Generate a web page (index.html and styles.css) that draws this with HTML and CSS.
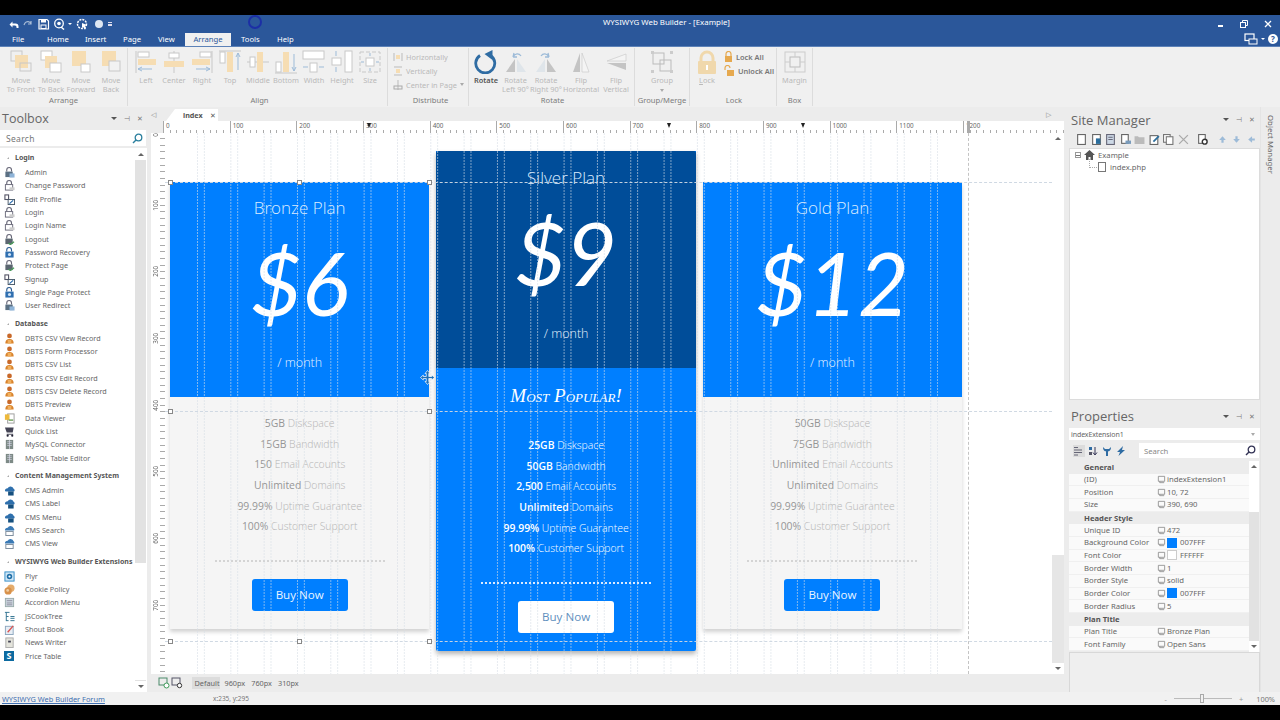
FILE: index.html
```html
<!DOCTYPE html>
<html>
	<head>
		<meta charset="UTF-8">
		<title>WYSIWYG Web Builder - [Example]</title>
		<link rel="stylesheet" href="styles.css">
	</head>
	<body>
		<svg class="defs" width="0" height="0">
			<symbol id="i-lock" viewBox="0 0 12 12"><path d="M3 5V3.2a2.6 2.6 0 0 1 5.2 0V5" fill="none" stroke="#667" stroke-width="1.2"/><rect x="1.5" y="5" width="8" height="6" fill="#5b7083"/><rect x="6" y="7" width="5.5" height="4.5" fill="#8fb4d8"/></symbol>
			<symbol id="i-lock2" viewBox="0 0 12 12"><path d="M3 5V3.2a2.6 2.6 0 0 1 5.2 0V5" fill="none" stroke="#667" stroke-width="1.2"/><rect x="1.5" y="5" width="8" height="6" fill="#fff" stroke="#667"/><rect x="6" y="8" width="5.5" height="3" fill="#ccc"/></symbol>
			<symbol id="i-lock3" viewBox="0 0 12 12"><path d="M3 5V3.2a2.6 2.6 0 0 1 5.2 0V5" fill="none" stroke="#27598f" stroke-width="1.2"/><rect x="1.5" y="5" width="9" height="6.5" fill="#2f6fb0"/><circle cx="6" cy="8.2" r="1.7" fill="#cfe2f5"/></symbol>
			<symbol id="i-edit" viewBox="0 0 12 12"><rect x="1" y="1" width="4" height="5" fill="none" stroke="#556" stroke-width="1.2"/><rect x="4.5" y="6" width="7" height="5.5" fill="#fff" stroke="#456"/><path d="M6 10.5 10 7" stroke="#26a" stroke-width="1.3"/></symbol>
			<symbol id="i-out" viewBox="0 0 12 12"><path d="M3 5V3.2a2.6 2.6 0 0 1 5.2 0V5" fill="none" stroke="#667" stroke-width="1.2"/><rect x="1.5" y="5" width="8" height="6" fill="#5b6670"/><path d="M5 10l2 1.5 4-3" fill="none" stroke="#4a9a5a" stroke-width="1.4"/></symbol>
			<symbol id="i-person" viewBox="0 0 12 12"><circle cx="6" cy="3.2" r="2.6" fill="#c8692a"/><path d="M1.5 11.5c0-4 2-5 4.5-5s4.5 1 4.5 5z" fill="#d9822b"/><path d="M4 7.5h4v4H4z" fill="#f0b060"/></symbol>
			<symbol id="i-cloud" viewBox="0 0 12 12"><path d="M1 6.5a3 3 0 0 1 3-3 3.5 3.5 0 0 1 6.500.5 2 2 0 0 1 .5 3H2z" fill="#2f70ad"/><rect x="4.500" y="7" width="6" height="4.500" fill="#16507f"/></symbol>
			<symbol id="i-cloud2" viewBox="0 0 12 12"><path d="M1 6a3 3 0 0 1 3-3 3.500 3.500 0 0 1 6.500.5 2 2 0 0 1 .5 2.500z" fill="#3a7ab5"/><rect x="2" y="7" width="8" height="4.500" fill="#fff" stroke="#789"/></symbol>
			<symbol id="i-viewer" viewBox="0 0 12 12"><rect x="4" y="1" width="7" height="10" fill="#fff" stroke="#999"/><rect x="1" y="1.500" width="5" height="6" fill="#eeb93a"/><rect x="5" y="7" width="5" height="1.500" fill="#6a9c55"/></symbol>
			<symbol id="i-cart" viewBox="0 0 12 12"><path d="M1 1.500h9.500L9.500 7H3z" fill="#445"/><path d="M3 9h7" stroke="#445"/><circle cx="4" cy="10.500" r="1.200" fill="#223"/><circle cx="9" cy="10.500" r="1.200" fill="#223"/></symbol>
			<symbol id="i-db" viewBox="0 0 12 12"><rect x="2" y="1" width="8" height="10" fill="#7d8a86"/><path d="M3.500 3h5M3.500 5h5M3.500 7h5M6 1v10" stroke="#dde" stroke-width=".7"/></symbol>
			<symbol id="i-plyr" viewBox="0 0 12 12"><rect x="1" y="1" width="10" height="10" fill="#cfe6f6" stroke="#2f8ac4"/><circle cx="6" cy="6" r="3" fill="#1f6fa8"/><circle cx="6" cy="6" r="1.200" fill="#fff"/></symbol>
			<symbol id="i-cookie" viewBox="0 0 12 12"><circle cx="7.500" cy="4.500" r="4" fill="#e5ac6c"/><circle cx="4.500" cy="7.500" r="4" fill="#d8914a"/><circle cx="4" cy="7" r="1.500" fill="#f1cfa0"/></symbol>
			<symbol id="i-acc" viewBox="0 0 12 12"><rect x="1.500" y="1.500" width="9" height="9" fill="#ccd5de" stroke="#9aa"/><path d="M3 4h6M3 6.500h6M3 8.500h6" stroke="#889" stroke-width=".9"/></symbol>
			<symbol id="i-tree" viewBox="0 0 12 12"><path d="M1 1.500h5M2.500 1.500V11M2.500 6H5M2.500 10.500H5" stroke="#2a6d8c" fill="none"/><path d="M7 6h4.500M7 8h4.500M7 10.500h4.500" stroke="#2a6d8c"/></symbol>
			<symbol id="i-book" viewBox="0 0 12 12"><rect x="1.500" y="2.500" width="8.500" height="9" fill="#e8eef5" stroke="#8aa4bd"/><path d="M4 9l6-7" stroke="#d9534f" stroke-width="1.500"/></symbol>
			<symbol id="i-news" viewBox="0 0 12 12"><rect x="2" y="1" width="8" height="10.500" fill="#e4e4dc" stroke="#aaa"/><rect x="4.500" y="4" width="3" height="2" fill="#445"/></symbol>
			<symbol id="i-dlg" viewBox="0 0 10 10"><path d="M1.500 1.500h7v5.500h-7zM3 7v1.500h5" fill="none" stroke="#888" stroke-width=".9"/></symbol>
		</svg>

		<div class="app">
			<div class="black"></div>

			<div class="titlebar">
				<div class="qat">
					<svg width="100" height="12" viewBox="0 0 100 12">
						<path d="M1.500 6.500 4.500 3.500v2h3a3 3 0 0 1 3 3v1.500H8.500v-1a1.500 1.500 0 0 0-1.500-1.500H4.500v2z" fill="#fff"/>
						<path d="M23 5.500a3.500 3.500 0 0 0-6-.5l-1 2M23 3v3h-3" fill="none" stroke="#a9bcd6" stroke-width="1.200"/>
						<path d="M31 1.500h8l1.500 1.500v8h-9.500z" fill="none" stroke="#fff" stroke-width="1.200"/><rect x="33" y="1.500" width="5" height="3" fill="#fff"/><rect x="33" y="7" width="5" height="3.500" fill="none" stroke="#fff"/>
						<circle cx="51" cy="5.500" r="4.300" fill="none" stroke="#fff" stroke-width="1.300"/><circle cx="51" cy="5.500" r="1.800" fill="#fff"/><path d="M53 9l3 2.500" stroke="#fff" stroke-width="1.500"/>
						<path d="M60 5h4l-2 2z" fill="#fff"/>
						<circle cx="74" cy="6" r="4.500" fill="none" stroke="#fff" stroke-width="1.500" stroke-dasharray="2 1"/><path d="M74 5l5 2-2 1 1 3-1.500.500-1-2.500-1.500 1z" fill="#fff"/>
						<circle cx="91" cy="6" r="4" fill="#dde6f2"/>
					</svg>
					<span class="qatmore"></span>
				</div>
				<div class="apptitle">WYSIWYG Web Builder - [Example]</div>
				<div class="winctl">
					<span class="wmin"></span>
					<svg width="8" height="8" viewBox="0 0 8 8"><rect x=".5" y="2.500" width="5" height="5" fill="#2b579a" stroke="#fff"/><path d="M2.500 2.500v-2h5v5h-2" fill="none" stroke="#fff"/></svg>
					<svg width="8" height="8" viewBox="0 0 8 8"><path d="M1 1l6 6M7 1 1 7" stroke="#fff" stroke-width="1.300"/></svg>
				</div>
				<span class="clickring"></span>
			</div>

			<div class="tabs">
				<span class="tab t-file">File</span>
				<span class="tab t-home">Home</span>
				<span class="tab t-insert">Insert</span>
				<span class="tab t-page">Page</span>
				<span class="tab t-view">View</span>
				<span class="tab active">Arrange</span>
				<span class="tab t-tools">Tools</span>
				<span class="tab t-help">Help</span>
				<div class="tabtools">
					<svg width="16" height="12" viewBox="0 0 16 12"><rect x="1" y="1" width="9" height="6.500" fill="none" stroke="#fff" stroke-width="1.200"/><rect x="5" y="6" width="8" height="5" fill="#2b579a" stroke="#fff"/></svg>
					<span class="tabcaret"></span>
					<span class="helpdot">?</span>
				</div>
			</div>

			<div class="ribbon">
				<div class="rgroup g-arrange">
					<div class="rbtns">
						<div class="rb w30"><svg class="ic" viewBox="0 0 24 24"><rect x="2" y="1" width="11" height="10" fill="none" stroke="#c8c8c8"/><rect x="6" y="5" width="13" height="13" fill="#f6ddb3"/><rect x="11" y="13" width="11" height="8" fill="none" stroke="#c8c8c8"/></svg><span>Move<br>To Front</span></div>
						<div class="rb w30"><svg class="ic" viewBox="0 0 24 24"><rect x="2" y="1" width="11" height="9" fill="#fff" stroke="#c8c8c8"/><rect x="6" y="6" width="12" height="12" fill="#f6ddb3"/><rect x="11" y="13" width="11" height="9" fill="#fff" stroke="#c8c8c8"/></svg><span>Move<br>To Back</span></div>
						<div class="rb w30"><svg class="ic" viewBox="0 0 24 24"><rect x="3" y="1" width="14" height="15" fill="#f6ddb3"/><rect x="12" y="14" width="9" height="8" fill="#fff" stroke="#c8c8c8"/></svg><span>Move<br>Forward</span></div>
						<div class="rb w30"><svg class="ic" viewBox="0 0 24 24"><rect x="3" y="1" width="14" height="15" fill="#f6ddb3"/><rect x="10" y="11" width="11" height="10" fill="#f2f2f2" stroke="#c8c8c8"/></svg><span>Move<br>Back</span></div>
					</div>
					<div class="rlabel">Arrange</div>
				</div>
				<div class="rgroup g-align">
					<div class="rbtns">
						<div class="rb w28"><svg class="ic" viewBox="0 0 24 24"><path d="M2 1v22" stroke="#c8c8c8"/><rect x="4" y="2" width="11" height="5" fill="#fff" stroke="#c8c8c8"/><rect x="4" y="9" width="18" height="6" fill="#f6ddb3"/><path d="M4 19h14M4 19l4-2M4 19l4 2" stroke="#9dbbd8" fill="none"/></svg><span>Left</span></div>
						<div class="rb w28"><svg class="ic" viewBox="0 0 24 24"><path d="M12 1v22" stroke="#c8c8c8"/><rect x="7" y="3" width="10" height="5" fill="#fff" stroke="#c8c8c8"/><rect x="2" y="11" width="20" height="6" fill="#f6ddb3"/></svg><span>Center</span></div>
						<div class="rb w28"><svg class="ic" viewBox="0 0 24 24"><path d="M22 1v22" stroke="#c8c8c8"/><rect x="10" y="2" width="11" height="5" fill="#fff" stroke="#c8c8c8"/><rect x="2" y="9" width="18" height="6" fill="#f6ddb3"/><path d="M6 19h14M20 19l-4-2M20 19l-4 2" stroke="#9dbbd8" fill="none"/></svg><span>Right</span></div>
						<div class="rb w28"><svg class="ic" viewBox="0 0 24 24"><path d="M1 1h22" stroke="#c8c8c8"/><rect x="2" y="2" width="5" height="11" fill="#fff" stroke="#c8c8c8"/><rect x="9" y="2" width="6" height="20" fill="#f6ddb3"/><path d="M20 20V3M20 3l-2 4M20 3l2 4" stroke="#9dbbd8" fill="none"/></svg><span>Top</span></div>
						<div class="rb w28"><svg class="ic" viewBox="0 0 24 24"><path d="M1 12h22" stroke="#c8c8c8"/><rect x="4" y="7" width="5" height="10" fill="#fff" stroke="#c8c8c8"/><rect x="11" y="2" width="6" height="20" fill="#f6ddb3"/></svg><span>Middle</span></div>
						<div class="rb w28"><svg class="ic" viewBox="0 0 24 24"><path d="M1 23h22" stroke="#c8c8c8"/><rect x="2" y="12" width="5" height="10" fill="#fff" stroke="#c8c8c8"/><rect x="9" y="2" width="6" height="20" fill="#f6ddb3"/><path d="M20 4v17M20 21l-2-4M20 21l2-4" stroke="#9dbbd8" fill="none"/></svg><span>Bottom</span></div>
						<div class="rb w28"><svg class="ic" viewBox="0 0 24 24"><rect x="1" y="1" width="21" height="8" fill="#fff" stroke="#c8c8c8"/><rect x="8" y="13" width="7" height="9" fill="#fff" stroke="#c8c8c8"/><path d="M1 17h5M17 17h5" stroke="#9dbbd8"/></svg><span>Width</span></div>
						<div class="rb w28"><svg class="ic" viewBox="0 0 24 24"><rect x="15" y="1" width="7" height="21" fill="#fff" stroke="#c8c8c8"/><rect x="2" y="8" width="9" height="7" fill="#fff" stroke="#c8c8c8"/><path d="M6 1v5M6 17v5" stroke="#9dbbd8"/></svg><span>Height</span></div>
						<div class="rb w28"><svg class="ic" viewBox="0 0 24 24"><rect x="2" y="2" width="20" height="20" fill="none" stroke="#c8c8c8" stroke-dasharray="4 2"/><rect x="8" y="8" width="8" height="8" fill="#fff" stroke="#c8c8c8"/><path d="M3 12h3M18 12h3M12 3v3M12 18v3" stroke="#9dbbd8"/></svg><span>Size</span></div>
					</div>
					<div class="rlabel">Align</div>
				</div>
				<div class="rgroup g-dist">
					<div class="rlist">
						<div class="rl"><svg width="10" height="10" viewBox="0 0 10 10"><path d="M1 1v8M9 1v8" stroke="#bbb"/><rect x="3" y="3" width="4" height="4" fill="#f6ddb3"/></svg>Horizontally</div>
						<div class="rl"><svg width="10" height="10" viewBox="0 0 10 10"><path d="M1 1h8M1 9h8" stroke="#bbb"/><rect x="3" y="3" width="4" height="4" fill="#f6ddb3"/></svg>Vertically</div>
						<div class="rl"><svg width="10" height="10" viewBox="0 0 10 10"><path d="M5 0v10" stroke="#bbb"/><rect x="1" y="6" width="8" height="3" fill="none" stroke="#aaa"/></svg>Center in Page <i class="caret"></i></div>
					</div>
					<div class="rlabel">Distribute</div>
				</div>
				<div class="rgroup g-rotate">
					<div class="rbtns">
						<div class="rb w30 on"><svg class="ic" viewBox="0 0 24 24"><path d="M6 5.500a9.500 9.500 0 1 0 10.500 0" fill="none" stroke="#2f6ca3" stroke-width="2.800"/><path d="M18.500 0v10L10.500 4z" fill="#2f6ca3"/></svg><span>Rotate</span></div>
						<div class="rb w29"><svg class="ic" viewBox="0 0 24 24"><path d="M2 22 11 9v13z" fill="#c4c4c4"/><path d="M13 9l9 13h-9z" fill="#dfe5ea"/><path d="M9 7c2-4 6-4 8-1M9 7l1-4M9 7l4 0" fill="none" stroke="#9dbbd8" stroke-width="1.300"/></svg><span>Rotate<br>Left 90°</span></div>
						<div class="rb w32"><svg class="ic" viewBox="0 0 24 24"><path d="M2 22 11 9v13z" fill="#dfe5ea"/><path d="M13 9l9 13H13z" fill="#c4c4c4"/><path d="M15 7c-2-4-6-4-8-1M15 7l-1-4M15 7l-4 0" fill="none" stroke="#9dbbd8" stroke-width="1.300"/></svg><span>Rotate<br>Right 90°</span></div>
						<div class="rb w38"><svg class="ic" viewBox="0 0 24 24"><path d="M4 22 11 3v19z" fill="#c4c4c4"/><path d="M13 3l7 19h-7z" fill="#f4f4f4" stroke="#ccc" stroke-width=".7"/></svg><span>Flip<br>Horizontal</span></div>
						<div class="rb w32"><svg class="ic" viewBox="0 0 24 24"><path d="M22 4 3 11h19z" fill="#f4f4f4" stroke="#ccc" stroke-width=".7"/><path d="M22 13v7L3 13z" fill="#c4c4c4"/></svg><span>Flip<br>Vertical</span></div>
					</div>
					<div class="rlabel">Rotate</div>
				</div>
				<div class="rgroup g-merge">
					<div class="rbtns">
						<div class="rb wfull"><svg class="ic" viewBox="0 0 24 24"><rect x="3" y="3" width="11" height="11" fill="none" stroke="#bbb"/><rect x="10" y="10" width="11" height="11" fill="none" stroke="#bbb"/><path d="M1 1h3v3H1zM20 1h3v3h-3zM1 20h3v3H1zM20 20h3v3h-3z" fill="#ccc"/></svg><span>Group<br><i class="caret"></i></span></div>
					</div>
					<div class="rlabel">Group/Merge</div>
				</div>
				<div class="rgroup g-lock">
					<div class="rbtns">
						<div class="rb w30 lockb"><svg class="ic" viewBox="0 0 24 24"><path d="M6 12V8a6 6 0 0 1 12 0v4" fill="none" stroke="#f0d8ac" stroke-width="3"/><rect x="3" y="11" width="18" height="13" rx="1" fill="#f0d8ac"/><rect x="11" y="15" width="2" height="5" fill="#fff"/></svg><span><u>L</u>ock</span></div>
						<div class="rlist locks">
							<div class="rl strong"><svg width="9" height="11" viewBox="0 0 9 11"><path d="M2 5V3a2.500 2.500 0 0 1 5 0v2" fill="none" stroke="#e6a94f" stroke-width="1.200"/><rect x="1" y="5" width="7" height="6" fill="#e6a94f"/></svg>Lock All</div>
							<div class="rl strong"><svg width="11" height="11" viewBox="0 0 11 11"><path d="M1 5V3a2.500 2.500 0 0 1 5 0" fill="none" stroke="#e6a94f" stroke-width="1.200"/><rect x="3" y="5" width="7" height="6" fill="#e6a94f"/></svg>Unlock All</div>
						</div>
					</div>
					<div class="rlabel">Lock</div>
				</div>
				<div class="rgroup g-box">
					<div class="rbtns">
						<div class="rb wfull"><svg class="ic" viewBox="0 0 24 24"><rect x="2" y="2" width="20" height="20" fill="none" stroke="#ccc"/><rect x="7" y="7" width="10" height="10" fill="none" stroke="#bbb"/><path d="M12 2v5M12 17v5M2 12h5M17 12h5" stroke="#ccc"/></svg><span>Margin</span></div>
					</div>
					<div class="rlabel">Box</div>
				</div>
			</div>

			<div class="workspace">
				<aside class="toolbox">
					<div class="panelhead">
						<h2>Toolbox</h2>
						<div class="panelbtns"><i class="caret dark"></i><b>⊣</b><b>✕</b></div>
					</div>
					<div class="searchbox">
						<span>Search</span>
						<svg width="11" height="11" viewBox="0 0 11 11"><circle cx="6.500" cy="4.500" r="3.300" fill="none" stroke="#2a7f9e" stroke-width="1.300"/><path d="M4 7 1 10" stroke="#2a7f9e" stroke-width="1.500"/></svg>
					</div>
					<div class="toolarea">
						<div class="toollist">
							<h3>Login</h3>
							<div class="ti"><svg class="ti-ic"><use href="#i-lock"/></svg>Admin</div>
							<div class="ti"><svg class="ti-ic"><use href="#i-lock2"/></svg>Change Password</div>
							<div class="ti"><svg class="ti-ic"><use href="#i-edit"/></svg>Edit Profile</div>
							<div class="ti"><svg class="ti-ic"><use href="#i-lock2"/></svg>Login</div>
							<div class="ti"><svg class="ti-ic"><use href="#i-lock2"/></svg>Login Name</div>
							<div class="ti"><svg class="ti-ic"><use href="#i-out"/></svg>Logout</div>
							<div class="ti"><svg class="ti-ic"><use href="#i-lock3"/></svg>Password Recovery</div>
							<div class="ti"><svg class="ti-ic"><use href="#i-out"/></svg>Protect Page</div>
							<div class="ti"><svg class="ti-ic"><use href="#i-edit"/></svg>Signup</div>
							<div class="ti"><svg class="ti-ic"><use href="#i-lock3"/></svg>Single Page Protect</div>
							<div class="ti"><svg class="ti-ic"><use href="#i-lock"/></svg>User Redirect</div>
							<h3>Database</h3>
							<div class="ti"><svg class="ti-ic"><use href="#i-person"/></svg>DBTS CSV View Record</div>
							<div class="ti"><svg class="ti-ic"><use href="#i-person"/></svg>DBTS Form Processor</div>
							<div class="ti"><svg class="ti-ic"><use href="#i-person"/></svg>DBTS CSV List</div>
							<div class="ti"><svg class="ti-ic"><use href="#i-person"/></svg>DBTS CSV Edit Record</div>
							<div class="ti"><svg class="ti-ic"><use href="#i-person"/></svg>DBTS CSV Delete Record</div>
							<div class="ti"><svg class="ti-ic"><use href="#i-person"/></svg>DBTS Preview</div>
							<div class="ti"><svg class="ti-ic"><use href="#i-viewer"/></svg>Data Viewer</div>
							<div class="ti"><svg class="ti-ic"><use href="#i-cart"/></svg>Quick List</div>
							<div class="ti"><svg class="ti-ic"><use href="#i-db"/></svg>MySQL Connector</div>
							<div class="ti"><svg class="ti-ic"><use href="#i-db"/></svg>MySQL Table Editor</div>
							<h3>Content Management System</h3>
							<div class="ti"><svg class="ti-ic"><use href="#i-cloud"/></svg>CMS Admin</div>
							<div class="ti"><svg class="ti-ic"><use href="#i-cloud"/></svg>CMS Label</div>
							<div class="ti"><svg class="ti-ic"><use href="#i-cloud"/></svg>CMS Menu</div>
							<div class="ti"><svg class="ti-ic"><use href="#i-cloud2"/></svg>CMS Search</div>
							<div class="ti"><svg class="ti-ic"><use href="#i-cloud2"/></svg>CMS View</div>
							<h3>WYSIWYG Web Builder Extensions</h3>
							<div class="ti"><svg class="ti-ic"><use href="#i-plyr"/></svg>Plyr</div>
							<div class="ti"><svg class="ti-ic"><use href="#i-cookie"/></svg>Cookie Policy</div>
							<div class="ti"><svg class="ti-ic"><use href="#i-acc"/></svg>Accordion Menu</div>
							<div class="ti"><svg class="ti-ic"><use href="#i-tree"/></svg>JSCookTree</div>
							<div class="ti"><svg class="ti-ic"><use href="#i-book"/></svg>Shout Book</div>
							<div class="ti"><svg class="ti-ic"><use href="#i-news"/></svg>News Writer</div>
							<div class="ti"><span class="price-ic">S</span>Price Table</div>
						</div>
						<div class="tscroll">
							<span class="sbtn up"></span>
							<span class="sthumb"></span>
							<span class="sbtn down"></span>
						</div>
					</div>
				</aside>

				<main class="doc">
					<div class="doctabs">
						<span class="navarrow">◁</span>
						<span class="doctab">index <b>✕</b></span>
						<span class="navarrow right">▷</span>
					</div>
					<div class="hruler">
						<span>0</span><span>100</span><span>200</span><span>300</span><span>400</span><span>500</span><span>600</span><span>700</span><span>800</span><span>900</span><span>1000</span><span>1100</span><span>1200</span>
						<i class="mark m1"></i><i class="mark m2"></i><i class="mark m3"></i><i class="rhandle"></i>
					</div>
					<div class="viewrow">
						<div class="vruler">
							<span>0</span><span>100</span><span>200</span><span>300</span><span>400</span><span>500</span><span>600</span><span>700</span>
						</div>
						<div class="canvas">
							<div class="plans">
								<section class="plan side">
									<header class="planhead">
										<h4>Bronze Plan</h4>
										<div class="amount">$6</div>
										<div class="permonth">/ month</div>
									</header>
									<ul class="feat">
										<li><b>5GB</b> Diskspace</li>
										<li><b>15GB</b> Bandwidth</li>
										<li><b>150</b> Email Accounts</li>
										<li><b>Unlimited</b> Domains</li>
										<li><b>99.99%</b> Uptime Guarantee</li>
										<li><b>100%</b> Customer Support</li>
									</ul>
									<div class="dots"></div>
									<a class="buy">Buy Now</a>
								</section>
								<section class="plan featured">
									<header class="planhead">
										<h4>Silver Plan</h4>
										<div class="amount">$9</div>
										<div class="permonth">/ month</div>
									</header>
									<div class="popular">Most Popular!</div>
									<ul class="feat">
										<li><b>25GB</b> Diskspace</li>
										<li><b>50GB</b> Bandwidth</li>
										<li><b>2,500</b> Email Accounts</li>
										<li><b>Unlimited</b> Domains</li>
										<li><b>99.99%</b> Uptime Guarantee</li>
										<li><b>100%</b> Customer Support</li>
									</ul>
									<div class="dots"></div>
									<a class="buy">Buy Now</a>
								</section>
								<section class="plan side">
									<header class="planhead">
										<h4>Gold Plan</h4>
										<div class="amount">$12</div>
										<div class="permonth">/ month</div>
									</header>
									<ul class="feat">
										<li><b>50GB</b> Diskspace</li>
										<li><b>75GB</b> Bandwidth</li>
										<li><b>Unlimited</b> Email Accounts</li>
										<li><b>Unlimited</b> Domains</li>
										<li><b>99.99%</b> Uptime Guarantee</li>
										<li><b>100%</b> Customer Support</li>
									</ul>
									<div class="dots"></div>
									<a class="buy">Buy Now</a>
								</section>
							</div>
							<div class="vguides"></div>
							<div class="hguide y1"></div>
							<div class="hguide y2"></div>
							<div class="hguide y3"></div>
							<div class="rguide"></div>
							<i class="hd x1 y1"></i><i class="hd x2 y1"></i><i class="hd x3 y1"></i>
							<i class="hd x1 y2"></i><i class="hd x3 y2"></i>
							<i class="hd x1 y3"></i><i class="hd x2 y3"></i><i class="hd x3 y3"></i>
							<svg class="movecur" width="15" height="15" viewBox="0 0 15 15"><path d="M7.500.5 10 3.500H8.700v3h3V5L14.500 7.500 11.700 10V8.500h-3v3H10L7.500 14.500 5 11.500h1.300v-3h-3V10L.5 7.500 3.300 5v1.500h3v-3H5z" fill="#1f6fb5" stroke="#fff" stroke-width=".7"/></svg>
						</div>
						<div class="cscroll">
							<span class="sbtn up"></span>
							<span class="cthumb"></span>
							<span class="sbtn down"></span>
						</div>
					</div>
					<div class="viewbar">
						<svg width="12" height="12" viewBox="0 0 12 12"><rect x="1" y="1" width="8" height="7" fill="none" stroke="#4a8a6a"/><circle cx="8.500" cy="8.500" r="2.500" fill="#fff" stroke="#3f9a5a"/></svg>
						<svg width="12" height="12" viewBox="0 0 12 12"><rect x="1" y="1" width="8" height="7" fill="none" stroke="#556"/><circle cx="8.500" cy="8.500" r="2.200" fill="#fff" stroke="#333"/></svg>
						<span class="bp current">Default</span>
						<span class="bp">960px</span>
						<span class="bp">760px</span>
						<span class="bp">310px</span>
					</div>
				</main>

				<aside class="rightpane">
					<div class="panels">
						<div class="sitemgr">
							<div class="panelhead">
								<h2>Site Manager</h2>
								<div class="panelbtns"><i class="caret dark"></i><b>⊣</b><b>✕</b></div>
							</div>
							<div class="smtools">
								<svg class="sm" viewBox="0 0 10 10"><rect x="1.500" y=".5" width="7" height="9" fill="#fff" stroke="#666"/></svg>
								<svg class="sm" viewBox="0 0 10 10"><rect x="1.500" y=".5" width="7" height="9" fill="#fff" stroke="#666"/><rect x="4.500" y="4" width="4" height="5" fill="#2a6d9c"/></svg>
								<svg class="sm" viewBox="0 0 10 10"><rect x="1.500" y=".5" width="7" height="9" fill="#cdd9e6" stroke="#667"/><path d="M3 3h4M3 5h4" stroke="#667"/></svg>
								<svg class="sm" viewBox="0 0 10 10"><rect x="1.500" y=".5" width="6" height="8" fill="#fff" stroke="#666"/><rect x="5" y="6" width="5" height="3" fill="#7a9cbc"/></svg>
								<svg class="sm" viewBox="0 0 10 10"><path d="M.5 2h3l1 1h5v6h-9z" fill="#bbb"/></svg>
								<svg class="sm" viewBox="0 0 10 10"><rect x="1" y="1.500" width="7" height="8" fill="#fff" stroke="#666"/><path d="M4 7l5-5" stroke="#2a6d9c" stroke-width="1.500"/></svg>
								<svg class="sm" viewBox="0 0 10 10"><rect x=".5" y=".5" width="6" height="7" fill="#fff" stroke="#777"/><rect x="3" y="2.500" width="6" height="7" fill="#fff" stroke="#777"/></svg>
								<svg class="sm" viewBox="0 0 10 10"><path d="M1 1l8 8M9 1 1 9" stroke="#aaa" stroke-width="1.200"/></svg>
								<svg class="sm gapleft" viewBox="0 0 10 10"><rect x="1.500" y=".5" width="6" height="8" fill="#fff" stroke="#666"/><circle cx="7" cy="7" r="2.200" fill="#fff" stroke="#333" stroke-width="1.300"/></svg>
								<svg class="sm gapleft" viewBox="0 0 10 10"><path d="M5 2 8 5.500H6v2.500H4V5.500H2z" fill="#9dbbd8"/></svg>
								<svg class="sm" viewBox="0 0 10 10"><path d="M5 8 8 4.500H6V2H4v2.500H2z" fill="#9dbbd8"/></svg>
								<svg class="sm" viewBox="0 0 10 10"><path d="M2 5 5.500 2v2H8v2H5.500v2z" fill="#9dbbd8"/></svg>
							</div>
							<div class="tree">
								<div class="node"><i class="minus"></i><svg width="11" height="10" viewBox="0 0 11 10"><path d="M5.500 0 11 5H9v5H6.500V7h-2v3H2V5H0z" fill="#555"/></svg><span>Example</span></div>
								<div class="node leaf"><svg width="10" height="10" viewBox="0 0 10 10"><rect x="1.500" y=".5" width="7" height="9" fill="#fff" stroke="#777"/></svg><span>index.php</span></div>
							</div>
						</div>
						<div class="props">
							<div class="panelhead short">
								<h2>Properties</h2>
								<div class="panelbtns"><i class="caret dark"></i><b>⊣</b><b>✕</b></div>
							</div>
							<div class="combo"><span>indexExtension1</span><i class="caret"></i></div>
							<div class="ptools">
								<span class="ptbtn sel"><svg width="10" height="10" viewBox="0 0 10 10"><path d="M0 1.500h4M0 4h8M0 6.500h8M0 9h4" stroke="#667"/></svg></span>
								<span class="ptbtn"><svg width="10" height="10" viewBox="0 0 10 10"><path d="M7 1v7M7 9 5 6.500M7 9l2-2.500" stroke="#335" fill="none"/><rect x="1" y="1" width="3" height="3" fill="#2f6ca3"/><rect x="1" y="6" width="3" height="3" fill="#556"/></svg></span>
								<span class="ptbtn"><svg width="10" height="10" viewBox="0 0 10 10"><path d="M1 1c0 4 2 4 3 4.500V10h2V5.500C7 5 9 5 9 1L7 3H3z" fill="#2f6ca3"/></svg></span>
								<span class="ptbtn"><svg width="10" height="10" viewBox="0 0 10 10"><path d="M7 0 1 6h3L2.500 10 9 4H6z" fill="#2f6ca3"/></svg></span>
								<div class="psearch"><span>Search</span><svg width="11" height="11" viewBox="0 0 11 11"><circle cx="6.500" cy="4.500" r="3.300" fill="none" stroke="#335" stroke-width="1.300"/><path d="M4 7 1 10" stroke="#335" stroke-width="1.500"/></svg></div>
							</div>
							<div class="pgridwrap">
								<div class="pgrid">
									<div class="pgroup">General</div>
									<div class="prow"><span class="pn">(ID)</span><svg class="dl"><use href="#i-dlg"/></svg><span class="pv">indexExtension1</span></div>
									<div class="prow"><span class="pn">Position</span><svg class="dl"><use href="#i-dlg"/></svg><span class="pv">10, 72</span></div>
									<div class="prow"><span class="pn">Size</span><svg class="dl"><use href="#i-dlg"/></svg><span class="pv">390, 690</span></div>
									<div class="pgroup">Header Style</div>
									<div class="prow"><span class="pn">Unique ID</span><svg class="dl"><use href="#i-dlg"/></svg><span class="pv">472</span></div>
									<div class="prow"><span class="pn">Background Color</span><svg class="dl"><use href="#i-dlg"/></svg><i class="sw blue"></i><span class="pv">007FFF</span></div>
									<div class="prow"><span class="pn">Font Color</span><svg class="dl"><use href="#i-dlg"/></svg><i class="sw"></i><span class="pv">FFFFFF</span></div>
									<div class="prow"><span class="pn">Border Width</span><svg class="dl"><use href="#i-dlg"/></svg><span class="pv">1</span></div>
									<div class="prow"><span class="pn">Border Style</span><svg class="dl"><use href="#i-dlg"/></svg><span class="pv">solid</span></div>
									<div class="prow"><span class="pn">Border Color</span><svg class="dl"><use href="#i-dlg"/></svg><i class="sw blue"></i><span class="pv">007FFF</span></div>
									<div class="prow"><span class="pn">Border Radius</span><svg class="dl"><use href="#i-dlg"/></svg><span class="pv">5</span></div>
									<div class="pgroup">Plan Title</div>
									<div class="prow"><span class="pn">Plan Title</span><svg class="dl"><use href="#i-dlg"/></svg><span class="pv">Bronze Plan</span></div>
									<div class="prow"><span class="pn">Font Family</span><svg class="dl"><use href="#i-dlg"/></svg><span class="pv">Open Sans</span></div>
								</div>
								<div class="pscroll">
									<span class="sbtn up"></span>
									<span class="pthumb"></span>
									<span class="sbtn down"></span>
								</div>
							</div>
							<div class="pdesc"></div>
						</div>
					</div>
					<div class="objstrip"><span>Object Manager</span></div>
				</aside>
			</div>

			<div class="statusbar">
				<a class="forum">WYSIWYG Web Builder Forum</a>
				<span class="coords">x:235, y:295</span>
				<div class="zoomctl"><span>-</span><i class="ztrack"><i class="zthumb"></i></i><span>+</span><span class="zval">100%</span></div>
			</div>
			<div class="black"></div>
		</div>
	</body>
</html>
```

FILE: styles.css
```css
* {
	box-sizing: border-box;
}

html,
body {
	margin: 0;
	padding: 0;
	height: 720px;
	overflow: hidden;
	background: #000;
}

body {
	font-family: "Noto Sans", "Open Sans", sans-serif;
	font-size: 8px;
	color: #666;
}

.defs {
	position: absolute;
}

.app {
	width: 1280px;
	height: 720px;
	display: flex;
	flex-direction: column;
}

.black {
	height: 15px;
	flex: none;
	background: #000;
}

/* title bar */
.titlebar {
	height: 18px;
	flex: none;
	background: #2b579a;
	display: flex;
	align-items: center;
	position: relative;
	color: #fff;
}

.qat {
	width: 112px;
	padding-left: 8px;
	display: flex;
	align-items: center;
}

.qatmore {
	width: 4px;
	height: 4px;
	border-top: 1px solid #dde;
	border-bottom: 2px solid #dde;
}

.apptitle {
	position: absolute;
	left: 603px;
	top: 2px;
	font-size: 7.9px;
	white-space: nowrap;
}

.winctl {
	margin-left: auto;
	width: 62px;
	padding-right: 8px;
	display: flex;
	justify-content: space-between;
	align-items: center;
}

.wmin {
	width: 5px;
	height: 2px;
	background: #fff;
	margin-top: 3px;
}

.clickring {
	position: absolute;
	left: 248px;
	top: 0;
	width: 14px;
	height: 14px;
	border: 2px solid #1c2fa6;
	border-radius: 50%;
}

/* ribbon tabs */
.tabs {
	height: 13px;
	flex: none;
	background: #2b579a;
	display: flex;
	color: #fff;
	font-size: 7.7px;
	line-height: 13px;
}

.tab {
	white-space: nowrap;
}

.t-file {
	margin-left: 12px;
	width: 35px;
}

.t-home {
	width: 38px;
}

.t-insert {
	width: 38px;
}

.t-page {
	width: 35px;
}

.t-view {
	width: 27px;
}

.tab.active {
	width: 46px;
	background: #f0f0f0;
	color: #2b579a;
	text-align: center;
}

.t-tools {
	margin-left: 10px;
	width: 36px;
}

.tabtools {
	margin-left: auto;
	padding-right: 2px;
	display: flex;
	align-items: flex-start;
	gap: 1px;
}

.tabcaret {
	width: 0;
	height: 0;
	margin-top: 5px;
	border: 2px solid transparent;
	border-top-color: #fff;
}

.helpdot {
	width: 10px;
	height: 10px;
	margin: 1px 0 0 2px;
	border-radius: 50%;
	background: #fff;
	color: #2b579a;
	font-size: 8px;
	font-weight: 700;
	line-height: 10px;
	text-align: center;
}

/* ribbon */
.ribbon {
	height: 61px;
	flex: none;
	background: #f0f0f0;
	border-top: 1px solid #5d82b8;
	display: flex;
	padding-top: 1px;
	font-size: 7.4px;
	color: #b9b9b9;
}

.rgroup {
	height: 58px;
	border-right: 1px solid #dcdcdc;
	display: flex;
	flex-direction: column;
	flex: none;
}

.g-arrange {
	width: 128px;
	padding-left: 6px;
}

.g-align {
	width: 260px;
	padding-left: 4px;
}

.g-dist {
	width: 81px;
	padding-left: 5px;
}

.g-rotate {
	width: 166px;
	padding-left: 2px;
}

.g-merge {
	width: 55px;
}

.g-lock {
	width: 87px;
	padding-left: 2px;
}

.g-box {
	width: 36px;
}

.rbtns {
	height: 46px;
	flex: none;
	display: flex;
}

.rlabel {
	height: 12px;
	flex: none;
	font-size: 7.6px;
	line-height: 12px;
	color: #7b7b7b;
	text-align: center;
}

.g-arrange .rlabel {
	padding-right: 6px;
}

.rb {
	display: flex;
	flex-direction: column;
	align-items: center;
	text-align: center;
	line-height: 8.500px;
	padding-top: 2px;
	flex: none;
	white-space: nowrap;
}

.rb span {
	margin-top: 2px;
}

.w28 {
	width: 28px;
}

.w29 {
	width: 29px;
}

.w30 {
	width: 30px;
}

.w32 {
	width: 32px;
}

.w38 {
	width: 38px;
}

.wfull {
	width: 100%;
}

.ic {
	width: 24px;
	height: 24px;
	flex: none;
}

.rb.on {
	color: #555;
	font-weight: 600;
}

.g-dist .rlist {
	height: 46px;
	flex: none;
}

.rlist {
	flex: 1;
	display: flex;
	flex-direction: column;
	gap: 3px;
	padding-top: 3px;
}

.rl {
	display: flex;
	align-items: center;
	gap: 3px;
	height: 11px;
	white-space: nowrap;
}

.rl.strong {
	color: #777;
	font-weight: 600;
}

.locks {
	padding-left: 2px;
}

.caret {
	display: inline-block;
	width: 0;
	height: 0;
	border: 2px solid transparent;
	border-top: 3px solid #aaa;
	border-bottom: 0;
}

.caret.dark {
	border-top-color: #555;
	border-width: 3px 3px 0;
}

/* workspace */
.workspace {
	height: 585px;
	flex: none;
	display: flex;
	background: #ececec;
}

.panelhead {
	height: 23px;
	display: flex;
	align-items: center;
	justify-content: space-between;
	padding: 0 5px 0 2px;
}

.panelhead h2 {
	margin: 0;
	font-family: "Open Sans", sans-serif;
	font-size: 13px;
	font-weight: 400;
	color: #666;
}

.toolbox .panelhead h2 {
	font-size: 12.500px;
}

.panelbtns {
	display: flex;
	align-items: center;
	gap: 7px;
	color: #777;
}

.panelbtns b {
	font-size: 7px;
	font-weight: 400;
}

/* toolbox */
.toolbox {
	width: 148px;
	flex: none;
	display: flex;
	flex-direction: column;
}

.searchbox {
	height: 16px;
	margin-bottom: 2px;
	margin-right: 2px;
	padding: 0 3px 0 6px;
	background: #fff;
	display: flex;
	align-items: center;
	justify-content: space-between;
	font-size: 8.5px;
	color: #777;
	letter-spacing: .3px;
}

.toolarea {
	flex: 1;
	display: flex;
	background: #fff;
	margin-right: 1px;
	height: 543px;
}

.toollist {
	width: 135px;
	padding-top: 1px;
	overflow: hidden;
}

.toollist h3 {
	margin: 0;
	height: 17px;
	line-height: 13px;
	padding: 2px 0 0 15px;
	font-size: 7px;
	font-weight: 700;
	color: #555;
	white-space: nowrap;
	position: relative;
}

.toollist h3::before {
	content: "";
	position: absolute;
	left: 7px;
	top: 8px;
	border: 1.500px solid transparent;
	border-right-color: #aaa;
	border-bottom-color: #aaa;
}

.toollist h3:not(:first-child) {
	margin-top: 2px;
}

.ti {
	height: 13.330px;
	line-height: 13.330px;
	display: flex;
	align-items: center;
	padding-left: 4px;
	white-space: nowrap;
	font-size: 7.200px;
}

.ti-ic {
	width: 11px;
	height: 11px;
	margin-right: 10px;
	flex: none;
}

.price-ic {
	width: 10px;
	height: 10px;
	margin-right: 11px;
	background: #0c6aa0;
	color: #fff;
	font-size: 9px;
	font-weight: 700;
	line-height: 10px;
	text-align: center;
}

.tscroll,
.cscroll,
.pscroll {
	flex: none;
	display: flex;
	flex-direction: column;
	background: #e2e2e2;
}

.tscroll {
	width: 11px;
	height: 100%;
	margin-top: 1px;
}

.sbtn {
	height: 11px;
	flex: none;
	background: #fff;
	display: flex;
	align-items: center;
	justify-content: center;
}

.sbtn::after {
	content: "";
	border: 3px solid transparent;
}

.sbtn.up::after {
	border-top: 0;
	border-bottom: 3px solid #666;
}

.sbtn.down::after {
	border-bottom: 0;
	border-top: 3px solid #666;
}

.sthumb {
	margin-top: 403px;
	height: 117px;
	background: #fff;
}

.tscroll .down {
	margin-top: 1px;
}

/* document area */
.doc {
	width: 918px;
	flex: none;
	padding-left: 3px;
	display: flex;
	flex-direction: column;
}

.doctabs {
	height: 14px;
	flex: none;
	display: flex;
	align-items: flex-end;
	position: relative;
}

.navarrow {
	width: 15px;
	font-size: 7px;
	color: #888;
	align-self: center;
}

.navarrow.right {
	position: absolute;
	right: 5px;
}

.doctab {
	width: 52px;
	height: 12px;
	background: #fff;
	clip-path: polygon(9px 0, 100% 0, 100% 100%, 0 100%);
	font-size: 7.2px;
	font-weight: 700;
	line-height: 12px;
	color: #555;
	padding-left: 17px;
	white-space: nowrap;
}

.doctab b {
	font-weight: 400;
	margin-left: 5px;
}

.hruler {
	height: 12px;
	flex: none;
	margin-left: 12px;
	width: 901px;
	position: relative;
	display: flex;
	font-size: 6.300px;
	line-height: 9px;
	color: #666;
	background: repeating-linear-gradient(90deg, #aaa 0 1px, transparent 1px 6.667px) 0 9px / 100% 3px no-repeat #fff;
}

.hruler span {
	width: 66.667px;
	flex: none;
	padding-left: 2px;
	border-left: 1px solid #aaa;
	height: 12px;
}

.mark {
	position: absolute;
	top: 2px;
	width: 0;
	height: 0;
	border: 2px solid transparent;
	border-top: 5px solid #222;
	border-bottom: 0;
}

.m1 {
	left: 204px;
}

.m2 {
	left: 504px;
}

.m3 {
	left: 638px;
}

.rhandle {
	position: absolute;
	left: 804px;
	top: 0;
	width: 3px;
	height: 12px;
	background: #aaa;
}

.viewrow {
	height: 541px;
	flex: none;
	display: flex;
}

.vruler {
	width: 14px;
	flex: none;
	display: flex;
	flex-direction: column;
	overflow: hidden;
	font-size: 6.300px;
	color: #666;
	background: repeating-linear-gradient(180deg, #aaa 0 1px, transparent 1px 6.667px) 9px 5px / 5px 100% no-repeat #fff;
}

.vruler span {
	height: 66.667px;
	flex: none;
	writing-mode: vertical-rl;
	transform: rotate(180deg);
	text-align: end;
	line-height: 9px;
}

.canvas {
	width: 887px;
	flex: none;
	position: relative;
	background: #fff;
	overflow: hidden;
}

.plans {
	display: flex;
	align-items: flex-start;
	gap: 7px;
	padding-left: 5px;
	font-family: "Open Sans", sans-serif;
}

/* price tables */
.plan {
	width: 259.400px;
	flex: none;
	text-align: center;
}

.plan.side {
	margin-top: 49px;
	height: 447px;
	background: #f5f5f5;
	box-shadow: 0 3px 4px rgba(0, 0, 0, .18);
	color: #b4b4b4;
}

.plan.featured {
	margin-top: 18px;
	height: 500px;
	background: #007fff;
	box-shadow: 0 3px 5px rgba(0, 0, 0, .3);
	border-radius: 0 0 2px 2px;
	color: #fff;
}

.planhead {
	height: 215px;
	background: #007fff;
	color: #fff;
	padding-top: 14px;
}

.featured .planhead {
	height: 217px;
	padding-top: 15px;
	background: #004d99;
	border-radius: 2px 2px 0 0;
}

.planhead h4 {
	margin: 0;
	font-size: 17px;
	font-weight: 300;
	line-height: 24px;
	color: #dcecff;
}

.amount {
	margin-top: 17px;
	height: 90px;
	font-family: Lato, "Open Sans", sans-serif;
	font-size: 88px;
	font-style: italic;
	font-weight: 400;
	line-height: 90px;
}

.permonth {
	margin-top: 27px;
	font-size: 12.500px;
	font-weight: 300;
	line-height: 18px;
	color: #e6f2ff;
}

.featured .permonth {
	margin-top: 28px;
}

.popular {
	height: 43px;
	padding-top: 15px;
	font-family: "Liberation Serif", serif;
	font-size: 19px;
	font-style: italic;
	font-variant: small-caps;
	line-height: 26px;
}

.feat {
	list-style: none;
	margin: 0;
	padding: 16px 0 0;
	font-size: 10.400px;
	font-weight: 300;
	line-height: 20.670px;
}

.feat b {
	font-weight: 400;
	color: #959595;
}

.featured .feat b {
	font-weight: 600;
	color: #fff;
}

.featured .feat {
	padding-top: 24px;
}

.dots {
	width: 170px;
	margin: 23px auto 0;
	border-top: 2px dotted #d4d4d4;
}

.featured .dots {
	border-top-color: #dbeaff;
}

.buy {
	display: block;
	width: 96px;
	height: 32px;
	margin: 17px auto 0;
	border-radius: 3px;
	background: #007fff;
	color: #e9f4ff;
	font-size: 11.600px;
	line-height: 31px;
}

.featured .buy {
	background: #fff;
	color: #5f8fbe;
}

/* editor overlays */
.vguides {
	position: absolute;
	left: 31.700px;
	top: 0;
	bottom: 0;
	width: 741px;
	background: linear-gradient(90deg, rgba(215, 222, 230, .6) 0 1px, transparent 1px 6.670px, rgba(215, 222, 230, .6) 6.670px 7.670px, transparent 7.670px) 0 0 / 33.333px 100%;
	-webkit-mask-image: repeating-linear-gradient(180deg, #000 0 2px, transparent 2px 3px);
	mask-image: repeating-linear-gradient(180deg, #000 0 2px, transparent 2px 3px);
}

.hguide {
	position: absolute;
	left: 0;
	right: 0;
	border-top: 1px dashed rgba(205, 215, 225, .95);
}

.hguide.y1 {
	top: 49px;
}

.hguide.y2 {
	top: 278px;
}

.hguide.y3 {
	top: 508px;
}

.rguide {
	position: absolute;
	left: 803px;
	top: 0;
	bottom: 0;
	border-left: 1px dashed #c4c4c4;
}

.hd {
	position: absolute;
	width: 5px;
	height: 5px;
	margin: -2px 0 0 -2px;
	background: #fff;
	border: 1px solid #888;
}

.hd.x1 {
	left: 5px;
}

.hd.x2 {
	left: 134px;
}

.hd.x3 {
	left: 264px;
}

.hd.y1 {
	top: 49px;
}

.hd.y2 {
	top: 278px;
}

.hd.y3 {
	top: 508px;
}

.movecur {
	position: absolute;
	left: 255px;
	top: 237px;
}

.cscroll {
	width: 12px;
	flex: none;
	background: #fff;
}

.cthumb {
	flex: 1;
	margin-top: 411px;
	background: #e6e6e6;
}

.viewbar {
	height: 18px;
	flex: none;
	padding-left: 7px;
	display: flex;
	align-items: center;
	gap: 1px;
	font-size: 7.300px;
	color: #666;
}

.viewbar svg + svg {
	margin-right: 8px;
}

.bp {
	padding: 0 2.500px;
	height: 12px;
	line-height: 12px;
}

.bp.current {
	width: 28px;
	margin-right: 1px;
	background: #dcdcdc;
}

/* right panes */
.rightpane {
	width: 214px;
	flex: none;
	display: flex;
}

.panels {
	width: 194px;
	flex: none;
	padding-left: 3px;
}

.sitemgr {
	height: 291px;
	display: flex;
	flex-direction: column;
	margin-top: 2px;
}

.sitemgr .panelhead {
	height: 21px;
}

.smtools {
	height: 18px;
	flex: none;
	display: flex;
	align-items: center;
	gap: 3.500px;
	padding-left: 7px;
}

.sm {
	width: 11px;
	height: 11px;
	flex: none;
}

.sm.gapleft {
	margin-left: 5px;
}

.tree {
	flex: 1;
	background: #fff;
	border: 1px solid #dcdcdc;
	padding-left: 5px;
	width: 191px;
}

.node {
	height: 12px;
	display: flex;
	align-items: center;
	gap: 3px;
	color: #666;
	font-size: 7.700px;
}

.minus {
	width: 6px;
	height: 6px;
	border: 1px solid #999;
	background: linear-gradient(#777, #777) center / 4px 1px no-repeat;
}

.leaf {
	padding-left: 22px;
	position: relative;
}

.leaf::before {
	content: "";
	position: absolute;
	left: 14px;
	top: -2px;
	width: 7px;
	height: 8px;
	border-left: 1px dotted #aaa;
	border-bottom: 1px dotted #aaa;
}

.props {
	margin-top: 4px;
	font-size: 7.700px;
	width: 191px;
}

.panelhead.short {
	height: 24px;
}

.combo {
	height: 12px;
	background: #fff;
	display: flex;
	align-items: center;
	justify-content: space-between;
	padding: 0 5px 0 2px;
	font-size: 7px;
	letter-spacing: -.1px;
}

.ptools {
	height: 21px;
	display: flex;
	align-items: center;
	gap: 2px;
	padding-left: 4px;
}

.ptbtn {
	width: 12px;
	height: 12px;
	display: flex;
	align-items: center;
	justify-content: center;
}

.ptbtn.sel {
	background: #dcdcdc;
}

.psearch {
	margin-left: 10px;
	width: 120px;
	height: 15px;
	background: #fff;
	padding: 0 3px 0 5px;
	display: flex;
	align-items: center;
	justify-content: space-between;
	color: #888;
}

.pgridwrap {
	display: flex;
	height: 191px;
}

.pgrid {
	width: 180px;
	flex: none;
	overflow: hidden;
}

.pgroup,
.prow {
	height: 12.670px;
	line-height: 12.670px;
	display: flex;
	align-items: center;
	white-space: nowrap;
}

.pgroup {
	padding-left: 15px;
	font-weight: 700;
	color: #555;
	background: #ececec;
}

.prow {
	background: #fafafa;
	border-bottom: 1px solid #f0f0f0;
}

.pn {
	width: 88px;
	padding-left: 15px;
	flex: none;
}

.dl {
	width: 9px;
	height: 9px;
	flex: none;
	margin-right: 1px;
}

.pv {
	padding-left: 0;
}

.sw {
	width: 10px;
	height: 10px;
	margin-right: 3px;
	flex: none;
	background: #fff;
	border: 1px solid #ccc;
}

.sw.blue {
	background: #007fff;
	border-color: #007fff;
}

.pscroll {
	width: 10px;
	margin-left: 0;
}

.pthumb {
	height: 40px;
	background: #fff;
}

.pscroll .down {
	margin-top: auto;
}

.pdesc {
	height: 41px;
	border: 1px solid #d8d8d8;
	background: #efefef;
}

.objstrip {
	flex: 1;
	padding: 8px 0 0 5px;
	border-left: 1px solid #e4e4e4;
}

.objstrip span {
	display: block;
	writing-mode: vertical-rl;
	font-size: 7.800px;
	line-height: 10px;
	color: #666;
}

/* status bar */
.statusbar {
	height: 13px;
	flex: none;
	background: #f1f1f1;
	display: flex;
	align-items: center;
	font-size: 7.400px;
	position: relative;
}

.forum {
	padding-left: 2px;
	color: #3f6fb0;
	text-decoration: underline;
}

.coords {
	position: absolute;
	left: 213px;
	font-size: 6.500px;
	color: #777;
}

.zoomctl {
	margin-left: auto;
	padding-right: 5px;
	display: flex;
	align-items: center;
	color: #999;
}

.ztrack {
	position: relative;
	width: 58px;
	height: 1px;
	margin: 0 7px;
	background: #bbb;
}

.zthumb {
	position: absolute;
	left: 26px;
	top: -4px;
	width: 4px;
	height: 9px;
	background: #f1f1f1;
	border: 1px solid #aaa;
}

.zval {
	margin-left: 13px;
	color: #777;
}
```
